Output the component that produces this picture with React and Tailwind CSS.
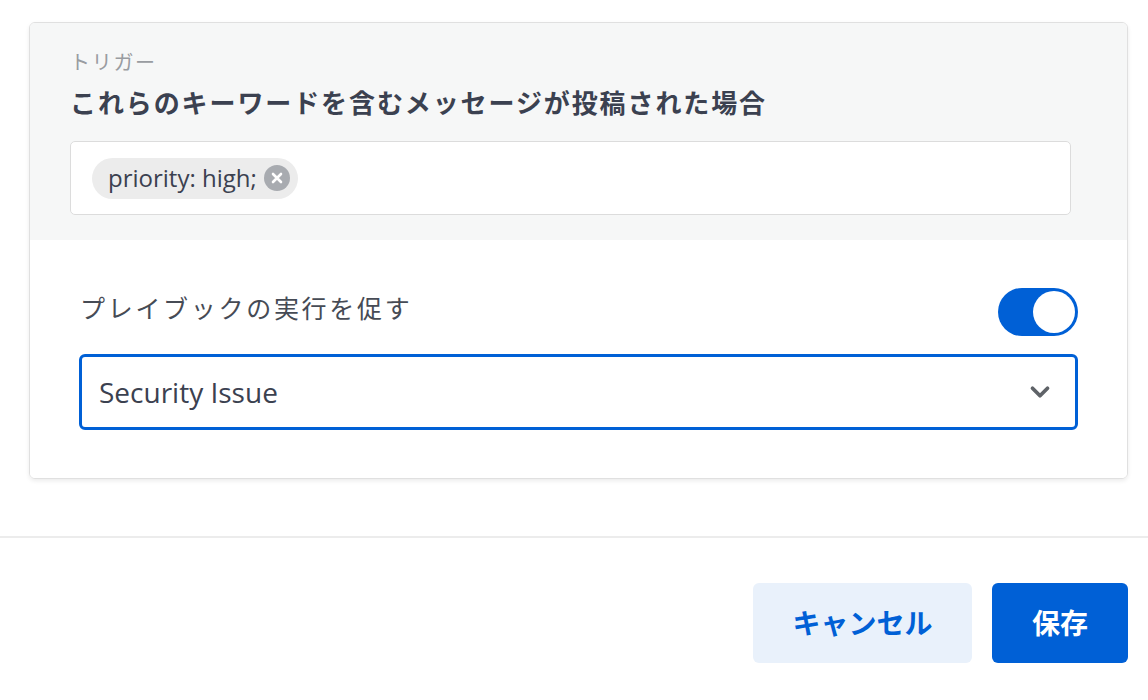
import { ChevronDown } from "lucide-react";

function KeywordChip({ label }) {
  return (
    <span className="inline-flex items-center h-[41px] pl-4 pr-[8px] rounded-full bg-[#ececec] text-[24px] leading-[32px] text-[#3b4150]">
      {label}
      <span className="ml-[7px] w-[26px] h-[26px] rounded-full bg-[#a8abb0] flex items-center justify-center">
        <svg width="12" height="12" viewBox="0 0 12 12">
          <path d="M2 2 L10 10 M10 2 L2 10" stroke="white" strokeWidth="2.6" strokeLinecap="round" />
        </svg>
      </span>
    </span>
  );
}

function Toggle({ on }) {
  return (
    <div className="relative w-[80px] h-[48px] rounded-full bg-[#0060d6] shrink-0">
      <div className={"absolute top-[3px] w-[42px] h-[42px] rounded-full bg-white " + (on ? "right-[3px]" : "left-[3px]")} />
    </div>
  );
}

export default function App() {
  return (
    <div className="w-[1148px] h-[700px] bg-white font-['Open_Sans','Noto_Sans_CJK_JP',sans-serif]">
      <div className="pl-[29px] pr-[20px] pt-[22px]">
        <div className="rounded-[6px] border border-[#e0e0e0] shadow-[0_2px_4px_rgba(0,0,0,0.08)] overflow-hidden">
          {/* trigger */}
          <div className="bg-[#f6f7f7] pl-[40px] pr-[56px] pt-[26px] pb-[25px]">
            <div className="text-[20px] leading-[28px] tracking-[1.7px] text-[#999ca1]">トリガー</div>
            <div className="mt-[10px] text-[26px] leading-[32px] tracking-[1.9px] font-bold text-[#3b4150]">
              これらのキーワードを含むメッセージが投稿された場合
            </div>
            <div className="mt-[22px] h-[74px] bg-white border border-[#dcdcdc] rounded-[5px] px-[21px] flex items-center">
              <KeywordChip label="priority: high;" />
            </div>
          </div>

          {/* playbook */}
          <div className="bg-white pl-[49px] pr-[49px] pt-[48px] pb-[48px]">
            <div className="flex items-center justify-between pl-[1px]">
              <span className="text-[25px] leading-[34px] tracking-[2.7px] text-[#464b55] -mt-[8px]">プレイブックの実行を促す</span>
              <Toggle on />
            </div>
            <div className="mt-[18px] h-[76px] border-[3px] border-[#0060d6] rounded-[6px] flex items-center justify-between pl-[17px] pr-[20px]">
              <span className="text-[28px] leading-[36px] text-[#3b4150]">Security Issue</span>
              <ChevronDown size={30} strokeWidth={3} className="text-[#5f6368]" />
            </div>
          </div>
        </div>
      </div>

      <div className="mt-[57px] border-t-2 border-[#ececec]" />

      <div className="flex justify-end gap-[20px] pr-[20px] pt-[45px]">
        <button className="w-[219px] h-[80px] rounded-[6px] bg-[#e9f1fb] text-[28px] font-bold text-[#0060d6]">
          キャンセル
        </button>
        <button className="w-[136px] h-[80px] rounded-[6px] bg-[#0060d6] text-[28px] font-bold text-white">
          保存
        </button>
      </div>
    </div>
  );
}
